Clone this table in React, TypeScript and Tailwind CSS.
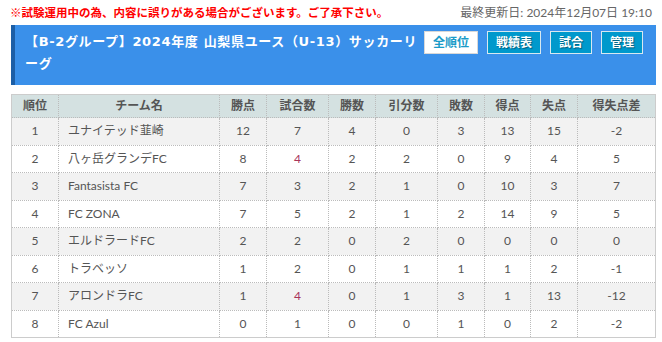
const font = { fontFamily: 'Lato, "Noto Sans CJK JP", sans-serif' }

type Row = {
  rank: number
  team: string
  pts: number
  played: number
  win: number
  draw: number
  lose: number
  gf: number
  ga: number
  diff: number
}

const rows: Row[] = [
  { rank: 1, team: 'ユナイテッド韮崎', pts: 12, played: 7, win: 4, draw: 0, lose: 3, gf: 13, ga: 15, diff: -2 },
  { rank: 2, team: '八ヶ岳グランデFC', pts: 8, played: 4, win: 2, draw: 2, lose: 0, gf: 9, ga: 4, diff: 5 },
  { rank: 3, team: 'Fantasista FC', pts: 7, played: 3, win: 2, draw: 1, lose: 0, gf: 10, ga: 3, diff: 7 },
  { rank: 4, team: 'FC ZONA', pts: 7, played: 5, win: 2, draw: 1, lose: 2, gf: 14, ga: 9, diff: 5 },
  { rank: 5, team: 'エルドラードFC', pts: 2, played: 2, win: 0, draw: 2, lose: 0, gf: 0, ga: 0, diff: 0 },
  { rank: 6, team: 'トラベッソ', pts: 1, played: 2, win: 0, draw: 1, lose: 1, gf: 1, ga: 2, diff: -1 },
  { rank: 7, team: 'アロンドラFC', pts: 1, played: 4, win: 0, draw: 1, lose: 3, gf: 1, ga: 13, diff: -12 },
  { rank: 8, team: 'FC Azul', pts: 0, played: 1, win: 0, draw: 0, lose: 1, gf: 0, ga: 2, diff: -2 },
]

const headers = ['順位', 'チーム名', '勝点', '試合数', '勝数', '引分数', '敗数', '得点', '失点', '得失点差']
const widths = ['w-[47px]', 'w-[161px]', 'w-[47px]', 'w-[62px]', 'w-[47px]', 'w-[62px]', 'w-[47px]', 'w-[46px]', 'w-[47px]', 'w-[78px]']

// 試合数が4試合のチームは赤字
const playedColor = (n: number) => (n === 4 ? 'text-[#a8345a]' : '')

export default function App() {
  return (
    <div className="w-[662px] h-[342px] bg-white overflow-hidden" style={font}>
      <div className="flex justify-between items-center h-[25px] pl-[10px] pr-[10px]">
        <span className="text-[11.5px] font-bold text-[#ff0000]">
          ※試験運用中の為、内容に誤りがある場合がございます。ご了承下さい。
        </span>
        <span className="text-[12px] text-[#666]">最終更新日: 2024年12月07日 19:10</span>
      </div>

      <div className="ml-[11px] w-[645px] h-[60px] flex items-start bg-[#3a90ea] border-l-[4px] border-[#1c5ea6]">
        <h1 className="w-[409px] shrink-0 pl-[10px] pt-[6px] text-[13px] leading-[22px] font-bold text-white tracking-[0.65px] font-['DejaVu_Sans','Noto_Sans_CJK_JP',sans-serif]">
          【B-2グループ】2024年度 山梨県ユース（U-13）サッカーリーグ
        </h1>
        <div className="flex gap-[9px] ml-auto mr-[16px] mt-[6px]">
          <button className="shrink-0 whitespace-nowrap h-[23px] px-[8px] text-[12px] font-bold bg-white text-[#1a9bc8] border border-[#d8d8d8]">
            全順位
          </button>
          {['戦績表', '試合', '管理'].map((label) => (
            <button
              key={label}
              className="shrink-0 whitespace-nowrap h-[23px] px-[8px] text-[12px] font-bold bg-[#0099cc] text-white border border-[#d8e8f0] [text-shadow:1px_1px_1px_rgba(0,0,0,0.4)]"
            >
              {label}
            </button>
          ))}
        </div>
      </div>

      <table className="ml-[11px] mt-[9px] w-[645px] table-fixed border-collapse border border-solid border-[#ccc] text-[12px] text-[#555]">
        <colgroup>
          {widths.map((w, i) => (
            <col key={i} className={w} />
          ))}
        </colgroup>
        <thead>
          <tr className="h-[23px] bg-[#d4e1e1]">
            {headers.map((h) => (
              <th key={h} className="font-bold text-center border border-dotted border-[#bbb]">
                {h}
              </th>
            ))}
          </tr>
        </thead>
        <tbody>
          {rows.map((r) => (
            <tr key={r.rank} className={`h-[27.5px] ${r.rank % 2 === 1 ? 'bg-[#f2f2f2]' : 'bg-white'}`}>
              <td className="text-center border border-dotted border-[#bbb]">{r.rank}</td>
              <td className="text-left pl-[9px] border border-dotted border-[#bbb]">{r.team}</td>
              <td className="text-center border border-dotted border-[#bbb]">{r.pts}</td>
              <td className={`text-center border border-dotted border-[#bbb] ${playedColor(r.played)}`}>{r.played}</td>
              <td className="text-center border border-dotted border-[#bbb]">{r.win}</td>
              <td className="text-center border border-dotted border-[#bbb]">{r.draw}</td>
              <td className="text-center border border-dotted border-[#bbb]">{r.lose}</td>
              <td className="text-center border border-dotted border-[#bbb]">{r.gf}</td>
              <td className="text-center border border-dotted border-[#bbb]">{r.ga}</td>
              <td className="text-center border border-dotted border-[#bbb]">{r.diff}</td>
            </tr>
          ))}
        </tbody>
      </table>
    </div>
  )
}
